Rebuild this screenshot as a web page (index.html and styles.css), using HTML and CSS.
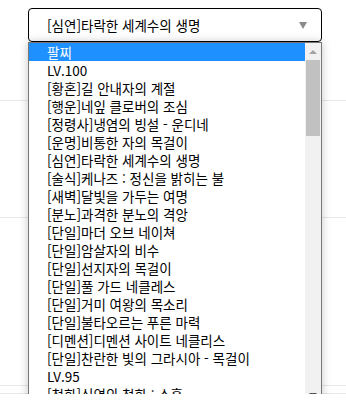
FILE: index.html
```html
<!DOCTYPE html>
<html lang="ko">
<head>
    <meta charset="UTF-8">
    <meta name="viewport" content="width=device-width, initial-scale=1.0">
    <title>아이템 선택</title>
    <link rel="stylesheet" href="styles.css">
</head>
<body>

<div class="table">
    <div class="table-row row-1">
        <div class="picker">
            <div class="picker-box">
                <span>[심연]타락한 세계수의 생명</span>
                <span class="arrow"></span>
            </div>

            <div class="dropdown">
                <div class="options">
                    <div class="option selected">팔찌</div>
                    <div class="option">LV.100</div>
                    <div class="option">[황혼]길 안내자의 계절</div>
                    <div class="option">[행운]네잎 클로버의 조심</div>
                    <div class="option">[정령사]냉염의 빙설 - 운디네</div>
                    <div class="option">[운명]비통한 자의 목걸이</div>
                    <div class="option">[심연]타락한 세계수의 생명</div>
                    <div class="option">[술식]케나즈 : 정신을 밝히는 불</div>
                    <div class="option">[새벽]달빛을 가두는 여명</div>
                    <div class="option">[분노]과격한 분노의 격앙</div>
                    <div class="option">[단일]마더 오브 네이쳐</div>
                    <div class="option">[단일]암살자의 비수</div>
                    <div class="option">[단일]선지자의 목걸이</div>
                    <div class="option">[단일]풀 가드 네클레스</div>
                    <div class="option">[단일]거미 여왕의 목소리</div>
                    <div class="option">[단일]불타오르는 푸른 마력</div>
                    <div class="option">[디멘션]디멘션 사이트 네클리스</div>
                    <div class="option">[단일]찬란한 빛의 그라시아 - 목걸이</div>
                    <div class="option">LV.95</div>
                    <div class="option">[청화]심연의 청화 : 소혼</div>
                </div>
                <div class="scrollbar">
                    <div class="scroll-btn"><span class="tri-up"></span></div>
                    <div class="thumb"></div>
                    <div class="track"></div>
                    <div class="scroll-btn"><span class="tri-down"></span></div>
                </div>
            </div>
        </div>
    </div>
    <div class="table-row row-2"></div>
    <div class="table-row row-3"></div>
    <div class="table-row row-4"></div>
</div>

</body>
</html>
```

FILE: styles.css
```css
body {
    margin: 0;
    background-color: #fff;
    font-family: "Noto Sans CJK KR", "Noto Sans", sans-serif;
    font-size: 13.5px;
    color: #000;
    overflow: hidden;
}
.table-row {
    border-bottom: 1px solid #e8e8e8;
    box-sizing: border-box;
}
.row-1 {
    height: 101px;
    padding-top: 8px;
}
.row-2 {
    height: 117px;
}
.row-3 {
    height: 168px;
}
.row-4 {
    height: 8px;
}
.picker {
    position: relative;
    width: 294px;
    margin-left: 28px;
}
.picker-box {
    height: 34px;
    box-sizing: border-box;
    border: 1px solid #000;
    border-radius: 4px;
    padding: 0 14px 0 18px;
    display: flex;
    align-items: center;
    justify-content: space-between;
    background-color: #fff;
}
.arrow {
    width: 0;
    height: 0;
    border-left: 4px solid transparent;
    border-right: 4px solid transparent;
    border-top: 7px solid #8a8a8a;
}
.dropdown {
    position: absolute;
    top: 34px;
    left: 0;
    width: 294px;
    height: 362px;
    box-sizing: border-box;
    border: 1px solid #767676;
    background-color: #fff;
    box-shadow: 0 0 9px rgba(0, 0, 0, 0.22);
    display: flex;
    overflow: hidden;
}
.options {
    flex: 1;
}
.option {
    height: 18px;
    line-height: 18px;
    padding-left: 18px;
    white-space: nowrap;
}
.option.selected {
    background-color: #1e90ff;
    color: #fff;
}
.scrollbar {
    width: 16px;
    background-color: #f1f1f1;
    display: flex;
    flex-direction: column;
}
.scroll-btn {
    height: 17px;
    display: flex;
    align-items: center;
    justify-content: center;
}
.tri-up {
    width: 0;
    height: 0;
    border-left: 4px solid transparent;
    border-right: 4px solid transparent;
    border-bottom: 4px solid #a3a3a3;
}
.tri-down {
    width: 0;
    height: 0;
    border-left: 4px solid transparent;
    border-right: 4px solid transparent;
    border-top: 4px solid #505050;
}
.thumb {
    height: 76px;
    margin: 0 1px;
    background-color: #c1c1c1;
}
.track {
    flex: 1;
}
```
